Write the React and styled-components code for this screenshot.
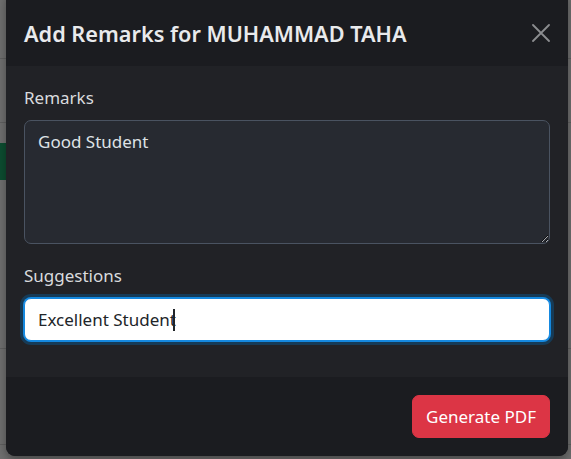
import { useState } from 'react'
import styled, { createGlobalStyle } from 'styled-components'

const GlobalStyle = createGlobalStyle`
    html, body {
        margin: 0;
        padding: 0;
        overflow: hidden;
    }
    body {
        font-family: 'Noto Sans', 'Liberation Sans', sans-serif;
        background: #6f6f6f;
    }
`

// background table rows that peek out from behind the backdrop
const rows = [
    { h: 59 },
    { h: 64 },
    { h: 226, chip: true },
    { h: 96 },
]

export default function App() {
    const [remarks, setRemarks] = useState('Good Student')
    const [suggestions, setSuggestions] = useState('Excellent Student')

    return (
        <Page>
            <GlobalStyle />
            <Behind>
                {rows.map((r, i) => (
                    <BgRow key={i} style={{ height: r.h }}>
                        {r.chip && <Chip />}
                    </BgRow>
                ))}
            </Behind>

            <Overlay>
                <Modal>
                    <Header>
                        <Title>Add Remarks for MUHAMMAD TAHA</Title>
                        <CloseButton aria-label="Close">
                            <svg width="18" height="18" viewBox="0 0 18 18">
                                <path d="M1 1 L17 17 M17 1 L1 17" stroke="#8c8d90" strokeWidth="1.8" strokeLinecap="round" />
                            </svg>
                        </CloseButton>
                    </Header>

                    <Body>
                        <Field>
                            <Label>Remarks</Label>
                            <TextArea rows={4} value={remarks} onChange={e => setRemarks(e.target.value)} />
                        </Field>
                        <Field>
                            <Label>Suggestions</Label>
                            <InputWrap>
                                <Input autoFocus value={suggestions} onChange={e => setSuggestions(e.target.value)} />
                                <Caret />
                            </InputWrap>
                        </Field>
                    </Body>

                    <Footer>
                        <Button>Generate PDF</Button>
                    </Footer>
                </Modal>
            </Overlay>
        </Page>
    )
}

const Page = styled.div`
    position: relative;
    width: 571px;
    height: 459px;
    overflow: hidden;
    background: #6f6f6f;
`
const Behind = styled.div`
    display: flex;
    flex-direction: column;
`
const BgRow = styled.div`
    box-sizing: border-box;
    border-bottom: 1px solid #5f5f5f;
    padding-top: 20px;
`
const Chip = styled.div`
    width: 40px;
    height: 37px;
    background: #0c4d30;
`
const Overlay = styled.div`
    position: absolute;
    inset: 0;
    padding-left: 6px;
`
const Modal = styled.div`
    width: 562px;
    margin-top: -10px;
    border-radius: 9px;
    overflow: hidden;
    background: #212226;
    color: #dee2e6;
    box-shadow: 0 4px 10px rgba(0, 0, 0, 0.35);
`
const Header = styled.div`
    box-sizing: border-box;
    height: 76px;
    padding: 10px 18px 0 18px;
    display: flex;
    align-items: center;
    justify-content: space-between;
    background: #1b1c20;
`
const Title = styled.h5`
    margin: 0;
    font-size: 21.7px;
    font-weight: 600;
    line-height: 27px;
    color: #e9eaec;
`
const CloseButton = styled.button`
    border: 0;
    background: transparent;
    padding: 0;
    width: 18px;
    height: 18px;
    display: flex;
    cursor: pointer;
`
const Body = styled.div`
    padding: 18px;
    display: flex;
    flex-direction: column;
`
const Field = styled.div`
    display: flex;
    flex-direction: column;
    margin-bottom: 18px;
`
const Label = styled.label`
    font-size: 17px;
    line-height: 27px;
    margin-bottom: 9px;
    color: #d9dbde;
`
const TextArea = styled.textarea`
    box-sizing: border-box;
    width: 100%;
    height: 124px;
    padding: 7px 13px;
    font-family: inherit;
    font-size: 17px;
    line-height: 27px;
    color: #dee2e6;
    background: #272a31;
    border: 1px solid #4a5361;
    border-radius: 7px;
    outline: none;
    resize: vertical;
`
const InputWrap = styled.div`
    position: relative;
`
const Input = styled.input`
    box-sizing: border-box;
    width: 100%;
    height: 43px;
    padding: 7px 13px;
    font-family: inherit;
    font-size: 17px;
    line-height: 27px;
    color: #212529;
    caret-color: transparent;
    background: #ffffff;
    border: 1px solid #1589e0;
    border-radius: 7px;
    outline: none;
    box-shadow: 0 0 0 1px #1589e0, 0 0 0 4px #163b57;
`
// text cursor drawn over the focused field, as seen in the capture
const Caret = styled.span`
    position: absolute;
    left: 149px;
    top: 11px;
    width: 2px;
    height: 22px;
    background: #212529;
    pointer-events: none;
`
const Footer = styled.div`
    padding: 18px;
    display: flex;
    justify-content: flex-end;
    background: #1b1c20;
`
const Button = styled.button`
    box-sizing: border-box;
    height: 43px;
    padding: 0 13px;
    font-family: inherit;
    font-size: 17px;
    color: #ffffff;
    background: #dc3545;
    border: 1px solid #dc3545;
    border-radius: 7px;
    cursor: pointer;
`
